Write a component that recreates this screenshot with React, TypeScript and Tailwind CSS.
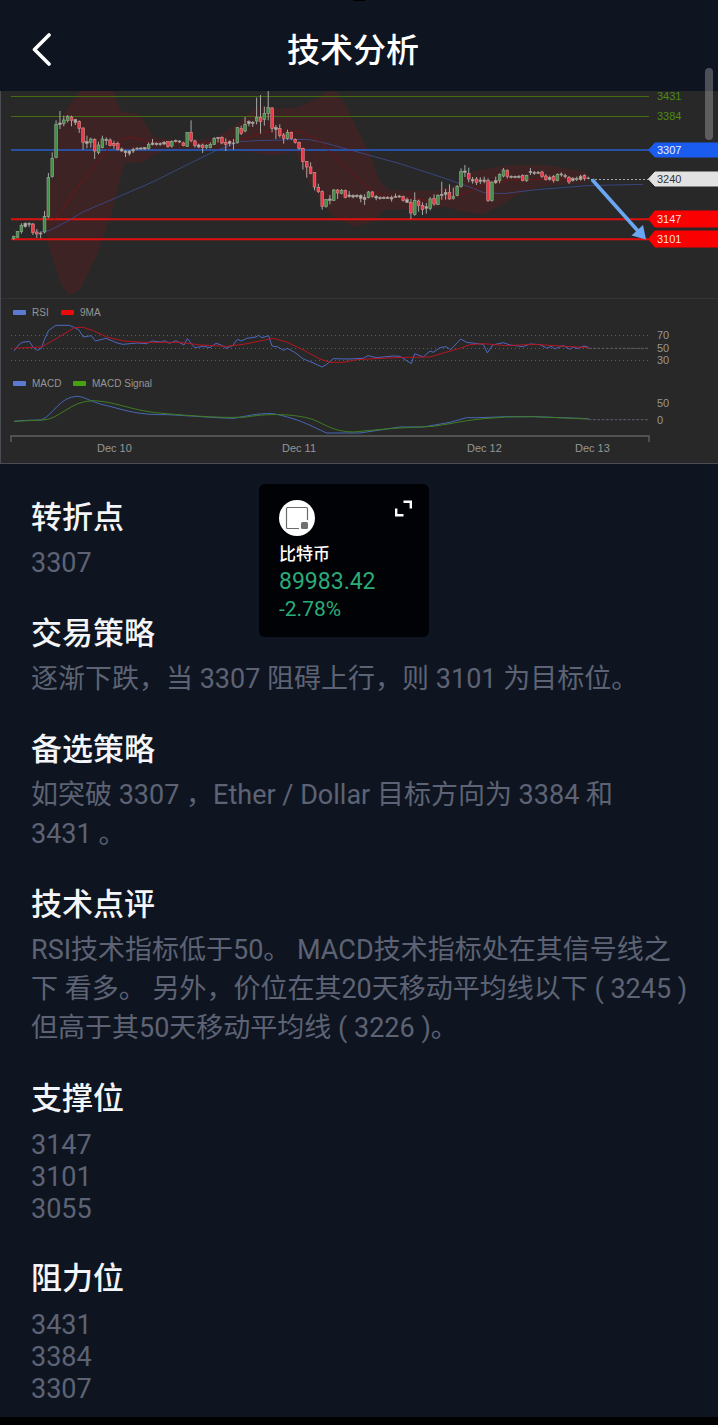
import type { ReactNode } from "react";

type Kind = "g" | "r" | "n";
type Candle = [high: number, top: number, bottom: number, low: number, kind: Kind];

const candles: Candle[] = [
  [452, 454, 460, 464, "g"], [438, 440, 457, 458, "g"], [415, 422, 440, 446, "g"], [412, 415, 425, 428, "n"],
  [412, 416, 418, 426, "n"], [414, 417, 443, 450, "r"], [432, 441, 447, 459, "r"], [440, 444, 447, 460, "n"],
  [378, 394, 441, 445, "g"], [264, 278, 395, 400, "g"], [202, 220, 275, 278, "g"], [106, 118, 218, 220, "g"],
  [78, 114, 119, 132, "n"], [92, 105, 115, 124, "g"], [90, 94, 106, 112, "g"], [92, 96, 106, 124, "r"],
  [102, 104, 112, 120, "n"], [106, 110, 130, 144, "r"], [127, 129, 172, 194, "r"], [152, 170, 175, 190, "n"],
  [158, 162, 172, 188, "g"], [160, 163, 198, 222, "r"], [170, 180, 203, 208, "g"], [152, 162, 188, 190, "g"],
  [157, 163, 167, 180, "n"], [160, 165, 181, 184, "r"], [167, 175, 181, 192, "r"], [170, 176, 193, 196, "r"],
  [188, 192, 198, 200, "n"], [196, 198, 203, 216, "n"], [196, 198, 205, 212, "n"], [188, 194, 198, 204, "n"],
  [186, 190, 192, 196, "n"], [187, 189, 192, 194, "n"], [186, 188, 192, 194, "n"], [172, 178, 191, 194, "g"],
  [162, 174, 179, 181, "n"], [172, 175, 178, 182, "n"], [172, 176, 179, 182, "n"], [168, 172, 177, 180, "n"],
  [169, 170, 185, 188, "r"], [166, 169, 183, 188, "g"], [164, 166, 169, 172, "n"], [166, 168, 171, 174, "n"],
  [170, 174, 182, 184, "r"], [142, 142, 184, 186, "g"], [106, 142, 167, 172, "r"], [164, 168, 181, 188, "r"],
  [176, 180, 186, 190, "n"], [176, 180, 188, 204, "r"], [178, 182, 187, 192, "g"], [172, 178, 188, 190, "g"],
  [156, 160, 178, 180, "g"], [156, 158, 161, 172, "n"], [154, 157, 174, 178, "r"], [160, 172, 178, 198, "r"],
  [166, 170, 176, 184, "n"], [162, 174, 176, 194, "n"], [126, 128, 172, 176, "g"], [122, 130, 146, 150, "r"],
  [96, 118, 138, 142, "g"], [106, 110, 116, 124, "n"], [108, 112, 115, 126, "n"], [38, 97, 108, 118, "g"],
  [30, 97, 110, 146, "r"], [65, 86, 103, 122, "g"], [18, 68, 86, 106, "g"], [66, 69, 130, 142, "r"],
  [120, 128, 133, 162, "n"], [118, 130, 152, 158, "r"], [144, 150, 160, 176, "r"], [134, 142, 160, 164, "g"],
  [140, 142, 161, 164, "r"], [160, 164, 172, 176, "r"], [170, 172, 190, 194, "r"], [188, 190, 230, 254, "r"],
  [228, 230, 246, 278, "r"], [232, 246, 265, 268, "r"], [262, 263, 306, 316, "r"], [296, 308, 320, 324, "r"],
  [316, 320, 365, 374, "r"], [342, 343, 365, 368, "g"], [330, 342, 346, 358, "n"], [312, 315, 346, 348, "g"],
  [312, 315, 324, 342, "r"], [312, 316, 326, 328, "g"], [314, 317, 338, 340, "r"], [318, 330, 335, 338, "n"],
  [328, 332, 336, 340, "n"], [328, 331, 335, 338, "n"], [328, 332, 340, 352, "n"], [328, 338, 344, 360, "n"],
  [318, 321, 338, 340, "g"], [318, 321, 334, 338, "r"], [330, 334, 339, 346, "n"], [334, 338, 341, 344, "n"],
  [334, 338, 341, 342, "n"], [334, 337, 340, 342, "n"], [332, 338, 342, 350, "n"], [326, 334, 337, 338, "n"],
  [330, 333, 336, 338, "n"], [332, 334, 346, 350, "r"], [338, 344, 352, 354, "n"], [342, 352, 384, 402, "r"],
  [322, 346, 388, 392, "g"], [344, 348, 362, 380, "r"], [352, 362, 374, 390, "r"], [354, 365, 370, 386, "n"],
  [336, 342, 370, 376, "g"], [328, 340, 357, 362, "r"], [328, 332, 358, 360, "g"], [290, 328, 332, 344, "n"],
  [312, 322, 328, 344, "n"], [298, 322, 342, 344, "r"], [308, 335, 341, 344, "g"], [300, 305, 331, 334, "g"],
  [250, 260, 304, 308, "g"], [240, 258, 262, 276, "n"], [248, 266, 282, 292, "r"], [276, 284, 288, 296, "n"],
  [276, 282, 292, 300, "r"], [277, 285, 289, 297, "n"], [275, 285, 289, 295, "n"], [280, 287, 347, 351, "r"],
  [290, 291, 347, 350, "g"], [275, 287, 293, 297, "n"], [265, 269, 287, 295, "g"], [249, 255, 273, 277, "g"],
  [253, 257, 275, 281, "r"], [271, 274, 277, 280, "n"], [272, 274, 277, 280, "n"], [270, 274, 277, 280, "n"],
  [268, 272, 287, 289, "r"], [269, 271, 287, 291, "g"], [249, 259, 263, 270, "n"], [258, 262, 265, 270, "n"],
  [258, 262, 265, 267, "n"], [257, 261, 275, 279, "r"], [267, 273, 283, 287, "r"], [272, 278, 283, 287, "n"],
  [270, 275, 287, 293, "r"], [265, 268, 287, 289, "g"], [262, 267, 270, 275, "n"], [266, 272, 275, 280, "n"],
  [273, 277, 291, 297, "r"], [276, 281, 286, 290, "n"], [275, 280, 284, 288, "g"], [269, 275, 283, 287, "n"],
  [268, 271, 281, 287, "r"], [275, 279, 281, 283, "n"],
];

const candleFill: Record<Kind, string> = { g: "#3f8f45", r: "#f03648", n: "#b8b2ac" };
const candleStroke: Record<Kind, string> = { g: "#8fa88c", r: "#d08a86", n: "#a39d98" };

const tags = [
  { label: "3307", y: 150, half: 7, fill: "#1a5cf0", text: "#e8eefc" },
  { label: "3240", y: 179, half: 7, fill: "#e2e2e2", text: "#333333" },
  { label: "3147", y: 219, half: 8, fill: "#fb0000", text: "#ffdcdc" },
  { label: "3101", y: 239, half: 8, fill: "#fb0000", text: "#ffdcdc" },
];

function Chart() {
  return (
    <svg
      viewBox="0 91 718 373"
      role="img"
      aria-label="Ether / Dollar"
      className="block w-full bg-[#282828]"
      fontFamily="'Liberation Sans', Arial, sans-serif"
      fontSize="11"
    >
      <path d="M0 298.5H718" stroke="#343434" />
      <path d="M0.5 91V464M0 463.5H718" stroke="#4a4e54" fill="none" />

      {/* volatility bands */}
      <g transform="translate(0 85) scale(0.33333)" fill="#ff0000" fillOpacity="0.1">
        <path d="M132 400 150 300 165 180 190 90 215 50 242 18H338L362 78 420 90 445 130 460 155 540 168 640 160 700 125 780 60 830 70 890 68 950 42 985 18 1010 22 1040 65 1080 150 1110 205 1140 290 1165 315 1300 318 1370 300 1400 265 1440 255 1530 240 1640 240 1760 262V295L1640 302 1560 325 1500 362 1450 388 1390 380 1340 366 1250 372 1150 376 1120 408 1065 426 1000 395 960 345 920 280 885 200 820 212 740 200 660 194 500 192 455 215 420 235 375 232 358 290 330 400 290 510 240 614 205 630 180 590 145 480Z" />
      </g>

      <g fill="none">
        <path d="M11 96.5H649M11 116.5H649" stroke="#446b12" />
        <path d="M11 150H649" stroke="#2850a4" strokeWidth="2" />
        <path d="M11 219.3H649M11 239.3H649" stroke="#e01010" strokeWidth="2" />
        <path d="M591 179.5H649" stroke="#a8a8a8" strokeDasharray="2 2" />
      </g>

      <g transform="translate(0 85) scale(0.33333)" fill="none" strokeWidth="3">
        <path
          d="M120 440 150 436 200 410 250 380 340 342 460 290 560 240 650 196 720 170 770 167 920 163 960 170 1080 203 1200 236 1320 275 1420 310 1450 323 1510 326 1600 315 1760 302 1930 298"
          stroke="#3b4a8c"
          strokeOpacity="0.85"
        />
        <path
          d="M150 420 190 370 230 310 280 245 330 185 370 160 400 157 440 170 600 175 720 165 800 140 900 140 960 170 1000 210 1060 270 1120 320 1160 335 1240 340 1300 350 1380 330 1450 300 1520 285 1760 280"
          stroke="#7a1216"
          strokeOpacity="0.8"
        />
        {candles.map(([high, top, bottom, low, kind], i) => {
          const x = 41 + i * 11.57;
          return (
            <g key={i}>
              <path d={`M${x} ${high}V${low}`} stroke="#a8a8a8" strokeWidth="3" />
              <rect
                x={x - 4}
                y={top}
                width="8"
                height={bottom - top}
                fill={candleFill[kind]}
                stroke={candleStroke[kind]}
                strokeWidth="2"
              />
            </g>
          );
        })}
      </g>

      <path d="M592 179.5 638 231" stroke="#6ba6f2" strokeWidth="3.6" />
      <path d="M646 239.5 631.5 235.5 643 225Z" fill="#6ba6f2" />

      <g fill="#4c8a10">
        <text x="657" y="100">3431</text>
        <text x="657" y="120">3384</text>
      </g>
      {tags.map((t) => (
        <g key={t.label}>
          <path
            d={`M648.5 ${t.y}L655 ${t.y - t.half}H718V${t.y + t.half}H655Z`}
            fill={t.fill}
            stroke={t.fill}
            strokeLinejoin="round"
          />
          <text x="657" y={t.y + 4} fill={t.text}>{t.label}</text>
        </g>
      ))}

      {/* RSI */}
      <path d="M11 335.5H649M11 348.5H649M11 360.5H649" stroke="#5c5c5c" strokeDasharray="1 3" />
      <g transform="translate(0 295) scale(0.33333)" fill="none" strokeWidth="3">
        <path
          d="M42 168 54 152 66 142 88 139 100 158 112 166 124 160 134 132 146 106 168 91H208L222 97 236 104 250 126 274 122 286 138 318 130 352 144 368 148 412 144 440 146 456 138 484 141 494 137 508 145 528 137 552 150 562 131 584 158 610 154 630 158 648 145 664 150 678 160 698 152 712 133 724 138 740 130 768 126 776 121 786 128 806 122 816 153 834 156 850 166 862 160 884 172 910 192 936 202 966 216 980 208 1000 191 1050 192 1090 190 1104 182 1130 188 1180 183 1200 184 1234 206 1244 176 1270 186 1290 168 1300 172 1320 158 1338 155 1352 164 1382 132 1400 142 1450 148 1462 174 1478 150 1510 143 1530 150 1570 155 1590 147 1620 149 1640 159 1656 154 1662 162 1690 152 1710 163 1720 156 1732 161 1752 153 1766 157"
          stroke="#4d68c0"
        />
        <path
          d="M42 160 124 156 160 136 224 98 250 97 280 107 320 126 370 138 430 142 540 142 600 150 680 154 730 148 820 130 860 141 910 165 960 192 990 202 1030 202 1070 194 1180 188 1290 186 1330 174 1380 160 1410 149 1450 146 1520 152 1600 148 1680 153 1766 158"
          stroke="#b81420"
        />
        <path d="M1766 160H1948" stroke="#606060" strokeDasharray="8 5" />
      </g>

      {/* MACD */}
      <g transform="translate(0 295) scale(0.33333)" fill="none" strokeWidth="3">
        <path
          d="M42 379 80 376 124 375C160 360 180 304 232 304C260 306 270 322 330 334C380 348 420 360 500 359C570 362 650 369 700 370C740 364 770 354 820 356C900 372 930 392 980 414H1080L1200 396 1270 396 1350 382 1400 368 1440 368 1520 365 1600 365 1766 371"
          stroke="#4668b8"
        />
        <path
          d="M42 379 130 375C180 372 210 318 280 317C360 322 390 348 500 356C590 364 680 370 740 366C820 352 900 360 940 374C980 390 1000 410 1060 411L1180 400 1300 394 1350 386 1400 377 1450 371 1520 366 1600 365 1766 372"
          stroke="#3f7d22"
        />
        <path d="M1766 374H1948" stroke="#5a6070" strokeDasharray="8 5" />
      </g>

      <path d="M11 442V436H649V442" stroke="#606060" strokeWidth="1.4" fill="none" />

      <g>
        <rect x="13" y="310" width="13" height="5" rx="1" fill="#5b7bd0" />
        <rect x="61" y="310" width="13" height="5" rx="1" fill="#ea0a0a" />
        <rect x="13" y="381" width="13" height="5" rx="1" fill="#5b7bd0" />
        <rect x="73" y="381" width="13" height="5" rx="1" fill="#46a010" />
      </g>
      <g fill="#969696">
        <g fontSize="10">
          <text x="32" y="316">RSI</text>
          <text x="80" y="316">9MA</text>
          <text x="32" y="387">MACD</text>
          <text x="92" y="387">MACD Signal</text>
        </g>
        <text x="657" y="339">70</text>
        <text x="657" y="352">50</text>
        <text x="657" y="364">30</text>
        <text x="657" y="407">50</text>
        <text x="657" y="424">0</text>
        <text x="97" y="452">Dec 10</text>
        <text x="282" y="452">Dec 11</text>
        <text x="467" y="452">Dec 12</text>
        <text x="575" y="452">Dec 13</text>
      </g>
    </svg>
  );
}

function Section({ title, children }: { title: string; children: ReactNode }) {
  return (
    <section>
      <h2 className="mb-2 text-[31px] leading-9 font-medium text-[#f4f5f8]">{title}</h2>
      {children}
    </section>
  );
}

function Text({ children }: { children: ReactNode }) {
  return <p className="leading-[39px]">{children}</p>;
}

function Levels({ values }: { values: number[] }) {
  return (
    <ul className="pt-1 pb-[3px] leading-8">
      {values.map((v) => (
        <li key={v}>{v}</li>
      ))}
    </ul>
  );
}

function Ticker() {
  return (
    <aside className="absolute top-5 left-[259px] flex w-[170px] flex-col rounded-md bg-[#010206] px-5 pt-4 pb-[15px]">
      <div className="flex items-start justify-between">
        <svg viewBox="0 0 36 36" className="size-9">
          <circle cx="18" cy="18" r="18" fill="#fff" />
          <path d="M20 28.500H8.500Q7.500 28.500 7.500 27.500V8.500Q7.500 7.500 8.500 7.500H27.500Q28.500 7.500 28.500 8.500V20" fill="none" stroke="#6b6b6b" strokeWidth="1.200" />
          <rect x="22" y="22" width="7" height="7" rx="1.500" fill="#707070" />
        </svg>
        <button type="button" aria-label="展开" className="-mr-1">
          <svg viewBox="0 0 18 18" className="size-[18px]" fill="none" stroke="#fff" strokeWidth="2.400">
            <path d="M8.500 1.700H15.800V8.500M1.200 8.500V15.300H8.500" />
          </svg>
        </button>
      </div>
      <span className="mt-[5px] text-[17px] leading-[26px] font-medium text-white">比特币</span>
      <span className="text-[23px] leading-[30px] text-[#2bab78]">89983.42</span>
      <span className="text-[21px] leading-[25px] text-[#2bab78]">-2.78%</span>
    </aside>
  );
}

export default function App() {
  return (
    <div className="relative flex min-h-screen flex-col bg-[#0e1521] font-[Roboto,'Noto_Sans_CJK_SC',sans-serif]">
      <div className="absolute top-0 left-1/2 h-px w-3 -translate-x-1/2 bg-black" />
      <header className="grid h-[91px] grid-cols-[1fr_auto_1fr] items-center pt-[10px] pr-11 pl-8">
        <button type="button" aria-label="返回" className="justify-self-start">
          <svg viewBox="0 0 20 36" className="h-9 w-5" fill="none" stroke="#fff" strokeWidth="3.600" strokeLinecap="round" strokeLinejoin="round">
            <path d="M17 2 2.500 16.500 17 31" />
          </svg>
        </button>
        <h1 className="text-[33px] leading-10 font-medium text-white">技术分析</h1>
      </header>

      <Chart />

      <main className="relative flex flex-1 flex-col gap-[33px] pt-9 pr-7 pb-2 pl-[31px] text-[27px] text-[#5d6374]">
        <Section title="转折点">
          <Text>3307</Text>
        </Section>
        <Section title="交易策略">
          <Text>逐渐下跌，当 3307 阻碍上行，则 3101 为目标位。</Text>
        </Section>
        <Section title="备选策略">
          <Text>如突破 3307 ，Ether / Dollar 目标方向为 3384 和 3431&nbsp;。</Text>
        </Section>
        <Section title="技术点评">
          <Text>
            RSI技术指标低于50。 MACD技术指标处在其信号线之下 看多。 另外，价位在其20天移动平均线以下 ( 3245 ) 但高于其50天移动平均线 ( 3226 )。
          </Text>
        </Section>
        <Section title="支撑位">
          <Levels values={[3147, 3101, 3055]} />
        </Section>
        <Section title="阻力位">
          <Levels values={[3431, 3384, 3307]} />
        </Section>
        <Ticker />
      </main>
      <div className="h-2 bg-black" />

      <div className="absolute top-[68px] right-[5px] h-[72px] w-2 rounded-full bg-white/25" />
    </div>
  );
}
